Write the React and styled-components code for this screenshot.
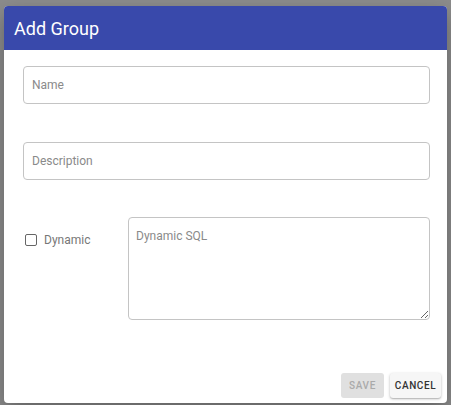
import React from 'react';
import styled, { createGlobalStyle } from 'styled-components';

const GlobalStyle = createGlobalStyle`
  html, body {
    margin: 0;
    height: 100%;
    background: #8c8c8c;
    font-family: Roboto, "Liberation Sans", sans-serif;
  }
  #root {
    height: 100%;
  }
`;

const Backdrop = styled.div`
  height: 405px;
  padding: 6px 4px 0 4px;
  box-sizing: border-box;
  overflow: hidden;
`;

const Dialog = styled.div`
  width: 443px;
  height: 397px;
  background: #fff;
  border-radius: 4px;
  display: flex;
  flex-direction: column;
  box-shadow: 0 8px 20px rgba(0, 0, 0, 0.3);
  overflow: hidden;
`;

const Header = styled.div`
  height: 44px;
  flex-shrink: 0;
  background: #3949ab;
  color: #fff;
  display: flex;
  align-items: center;
  padding: 0 10px;
  font-size: 18px;
  font-weight: 400;
`;

const Body = styled.div`
  flex: 1;
  padding: 16px 17px 0 19px;
  display: flex;
  flex-direction: column;
  gap: 38px;
`;

const TextField = styled.input`
  width: 100%;
  height: 38px;
  box-sizing: border-box;
  border: 1px solid #c4c4c4;
  border-radius: 4px;
  padding: 0 8px;
  font-family: inherit;
  font-size: 12px;
  color: #333;
  outline: none;

  &::placeholder {
    color: #8a8a8a;
  }
`;

const DynamicRow = styled.div`
  display: flex;
  align-items: flex-start;
  margin-top: -1px;
`;

const CheckLabel = styled.label`
  width: 105px;
  flex-shrink: 0;
  display: flex;
  align-items: center;
  gap: 7px;
  padding: 16px 0 0 2px;
  box-sizing: border-box;
  font-size: 12px;
  color: #777;
`;

const CheckBox = styled.span`
  width: 12px;
  height: 12px;
  box-sizing: border-box;
  border: 1.5px solid #666;
  border-radius: 2px;
`;

const SqlArea = styled.textarea`
  flex: 1;
  height: 103px;
  box-sizing: border-box;
  border: 1px solid #c4c4c4;
  border-radius: 4px;
  padding: 11px 7px;
  font-family: inherit;
  font-size: 12px;
  outline: none;
  resize: vertical;

  &::placeholder {
    color: #8a8a8a;
  }
`;

const Actions = styled.div`
  display: flex;
  justify-content: flex-end;
  gap: 6px;
  padding: 0 6px 5px 0;
`;

const Button = styled.button`
  height: 25px;
  width: ${({ $wide }) => ($wide ? '51px' : '43px')};
  border: none;
  border-radius: 3px;
  padding: 0;
  font-family: inherit;
  font-size: 10px;
  font-weight: 500;
  letter-spacing: 0.6px;
  background: ${({ disabled }) => (disabled ? '#e0e0e0' : '#f6f6f6')};
  color: ${({ disabled }) => (disabled ? '#aaaaaa' : '#333')};
  box-shadow: ${({ disabled }) =>
    disabled ? 'none' : '0 1px 3px rgba(0,0,0,0.25), 0 1px 1px rgba(0,0,0,0.12)'};
`;

const App = () => {
  return (
    <>
      <GlobalStyle />
      <Backdrop>
        <Dialog>
          <Header>Add Group</Header>
          <Body>
            <TextField placeholder="Name" />
            <TextField placeholder="Description" />
            <DynamicRow>
              <CheckLabel>
                <CheckBox />
                Dynamic
              </CheckLabel>
              <SqlArea placeholder="Dynamic SQL" />
            </DynamicRow>
          </Body>
          <Actions>
            <Button disabled>SAVE</Button>
            <Button $wide>CANCEL</Button>
          </Actions>
        </Dialog>
      </Backdrop>
    </>
  );
};

export default App;
